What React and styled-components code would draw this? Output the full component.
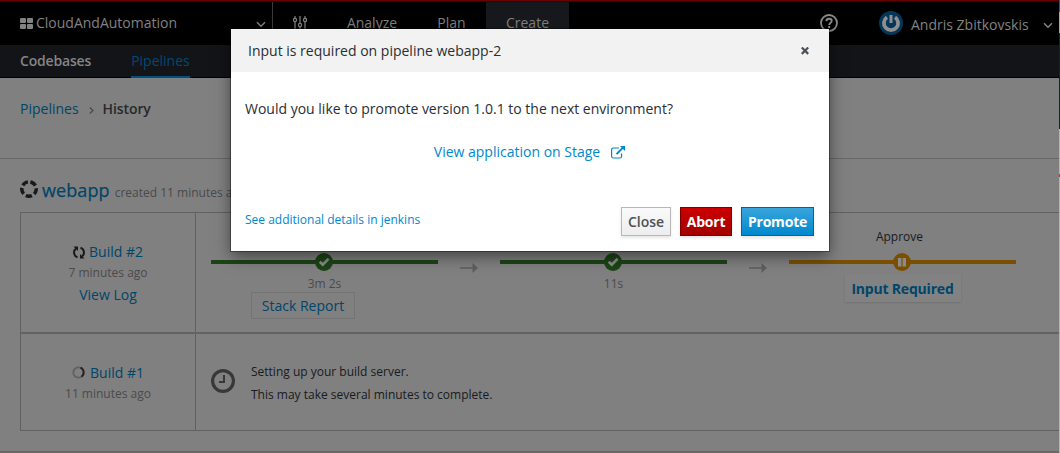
import React from "react";
import styled, { createGlobalStyle } from "styled-components";

const Global = createGlobalStyle`
  * { box-sizing: border-box; }
  body { margin: 0; background: #808080; font-family: "Open Sans", sans-serif; font-size: 14px; color: #1a1a1c; overflow: hidden; }
`;

const Shell = styled.div`
  position: relative;
  width: 1060px;
  height: 453px;
  overflow: hidden;
  display: flex;
`;
const Page = styled.div`
  width: 1059px;
  background: #808080;
  display: flex;
  flex-direction: column;
`;
const WindowEdge = styled.div`
  width: 1px;
  background: linear-gradient(#2c5488 0 12px, #aaa 12px 33px, #1d1f21 33px 129px, #b4b4b4 129px 174px, #a04040 174px 177px, #b4b4b4 177px);
`;
const TopBar = styled.header`
  height: 45px;
  flex: none;
  background: #000;
  border-top: 1px solid #690000;
  box-shadow: inset 0 1px 0 #290000;
  display: flex;
  color: #828282;
  line-height: 20px;
`;
const Space = styled.div`
  width: 273px;
  margin-top: 1px;
  height: 43px;
  border-right: 1px solid #3b3b3d;
  padding: 0 6px 0 20px;
  display: flex;
  align-items: center;
  gap: 3px;
`;
const SpaceName = styled.span`
  flex: 1;
  margin-top: -1px;
`;
const Tool = styled.div`
  width: 54px;
  padding: 13px 0 0 20px;
`;
const TopTab = styled.div`
  width: ${(p) => p.$w}px;
  margin-top: 1px;
  padding-top: 11px;
  text-align: center;
  background: ${(p) => (p.$active ? "linear-gradient(#16171b, #1b1d22)" : "none")};
`;
const User = styled.div`
  margin-left: auto;
  display: flex;
  padding: 10px 6px 0 0;
`;
const Help = styled.span`
  width: 59px;
  margin-top: 2px;
  line-height: 0;
`;
const Avatar = styled.span`
  width: 32px;
  line-height: 0;
`;
const UserName = styled.span`
  width: 132px;
  padding-top: 4px;
`;
const Caret = styled.span`
  display: flex;
  padding-top: ${(p) => p.$top}px;
`;
const SubBar = styled.nav`
  height: 33px;
  flex: none;
  background: #131418;
  border-bottom: 1px solid #000;
  display: flex;
  padding-left: 20px;
  gap: 40px;
`;
const SubTab = styled.span`
  height: 33px;
  padding-top: 5px;
  line-height: 21px;
  font-weight: ${(p) => (p.$active ? 400 : 600)};
  letter-spacing: ${(p) => (p.$active ? 0 : "-0.18px")};
  color: ${(p) => (p.$active ? "#004a75" : "#858585")};
  border-bottom: ${(p) => (p.$active ? "2px solid #005180" : "none")};
`;
const Crumbs = styled.div`
  height: 81px;
  flex: none;
  border-bottom: 1px solid #676767;
  padding: 21px 20px 0;
  display: flex;
  line-height: 20px;
`;
const Link = styled.a`
  color: #004568;
`;
const Sep = styled.span`
  width: 24px;
  padding: 8px 0 0 10px;
  line-height: 0;
`;
const Current = styled.span`
  font-weight: 600;
  letter-spacing: -0.1px;
  color: #27292c;
`;
const Heading = styled.div`
  display: flex;
  align-items: center;
  height: 53px;
  padding: 10px 20px 0;
  flex: none;
`;
const HeadingIcon = styled.svg`
  margin-top: -4px;
`;
const AppName = styled.a`
  font-size: 18px;
  letter-spacing: 0.1px;
  color: #00456a;
  -webkit-text-stroke: 0.25px #00456a;
  margin: -1px 5px 0 4px;
`;
const Created = styled.span`
  font-size: 12px;
  color: #494a4b;
  padding-top: 3px;
`;
const Table = styled.div`
  margin-left: 20px;
  border: 1px solid #606162;
  border-right: 0;
  height: 219px;
  display: flex;
  flex-direction: column;
`;
const Row = styled.div`
  display: flex;
  height: ${(p) => p.$h}px;
  border-bottom: ${(p) => (p.$last ? "none" : "2px solid #626364")};
`;
const BuildCell = styled.div`
  width: 175px;
  flex: none;
  border-right: 1px solid #606162;
  padding-top: 29px;
  text-align: center;
`;
const BuildName = styled.div`
  display: flex;
  justify-content: center;
  align-items: center;
  gap: 4px;
  line-height: 20px;
  color: #00456a;
`;
const Ago = styled.div`
  font-size: 12px;
  line-height: 21px;
  color: #4a4b4c;
`;
const Log = styled.div`
  line-height: 20px;
  padding-top: 2px;
  color: #00456a;
`;
const Stages = styled.div`
  display: flex;
  padding: 14px 0 0 15px;
`;
const Stage = styled.div`
  width: 227px;
  display: flex;
  flex-direction: column;
  align-items: center;
`;
const StageName = styled.div`
  font-size: 12px;
  line-height: 20px;
  height: 26px;
  padding-right: 6px;
`;
const Track = styled.div`
  width: 227px;
  height: 18px;
  display: flex;
  justify-content: center;
  padding-right: 1px;
  background: linear-gradient(${(p) => p.$color}, ${(p) => p.$color}) 0 7px / 100% 4px no-repeat;
`;
const Duration = styled.div`
  font-size: 12px;
  line-height: 20px;
  color: #4a4b4c;
  margin-top: 3px;
`;
const Arrow = styled.div`
  width: 62px;
  padding: 36px 0 0 22px;
  line-height: 0;
`;
const Report = styled.button`
  align-self: flex-start;
  width: 104px;
  height: 27px;
  margin: -2px 0 0 40px;
  padding: 0;
  border: 1px solid #747474;
  background: none;
  font: 400 14px/24px "Open Sans", sans-serif;
  color: #00456a;
`;
const Required = styled(Report)`
  align-self: center;
  width: 116px;
  height: 28px;
  margin: 3px 0 0;
  border: 0;
  background: #828282;
  box-shadow: 0 1px 2px rgba(0, 0, 0, 0.12);
  font-weight: 700;
  letter-spacing: -0.2px;
  line-height: 27px;
`;
const Message = styled.div`
  display: flex;
  align-items: flex-start;
  padding: 26px 0 0 15px;
  gap: 16px;
`;
const Clock = styled.span`
  margin-top: 9px;
  line-height: 0;
`;
const MessageText = styled.div`
  font-size: 12px;
  line-height: 23px;
`;
const PageEnd = styled.div`
  margin-top: auto;
  height: 2px;
  background: #696668;
`;
const Dialog = styled.section`
  position: absolute;
  left: 231px;
  top: 29px;
  width: 598px;
  height: 222px;
  background: #fff;
  box-shadow: 0 0 0 1px rgba(0, 0, 0, 0.35), 0 5px 15px rgba(0, 0, 0, 0.5);
  color: #292e34;
  display: flex;
  flex-direction: column;
`;
const DialogHead = styled.div`
  height: 43px;
  background: #f2f2f2;
  padding: 0 20px 0 17px;
  display: flex;
  align-items: center;
  justify-content: space-between;
`;
const Question = styled.div`
  padding: 27px 14px 0;
  line-height: 20px;
`;
const ViewLine = styled.div`
  display: flex;
  justify-content: center;
  align-items: center;
  gap: 11px;
  margin-top: 23px;
  padding-right: 1px;
  line-height: 20px;
  color: #0088ce;
`;
const DialogFoot = styled.div`
  margin-top: auto;
  padding: 0 15px 15px 14px;
  display: flex;
  align-items: center;
`;
const Details = styled.a`
  flex: 1;
  font-size: 12px;
  color: #0088ce;
  margin-top: -5px;
`;
const tones = {
  plain: ["linear-gradient(#fafafa, #ededed)", "#b7b7b7", "#4d5258"],
  danger: ["linear-gradient(#c00, #a30000)", "#780000", "#fff"],
  primary: ["linear-gradient(#39a5dc, #0088ce)", "#00659c", "#fff"],
};
const Button = styled.button`
  width: ${(p) => p.$w}px;
  height: 29px;
  margin-left: 9px;
  padding: 0;
  font: ${(p) => (p.$tone === "plain" ? 600 : 700)} 14px/27px "Open Sans", sans-serif;
  letter-spacing: ${(p) => (p.$tone === "plain" ? 0 : "-0.2px")};
  background: ${(p) => tones[p.$tone][0]};
  border: 1px solid ${(p) => tones[p.$tone][1]};
  color: ${(p) => tones[p.$tone][2]};
  box-shadow: 0 2px 3px rgba(3, 3, 3, 0.1);
`;

const Chevron = () => (
  <svg width="10" height="7" viewBox="0 0 10 7" fill="none" stroke="#858585" strokeWidth="1.4">
    <path d="M1 1.2 5 5.2 9 1.2" />
  </svg>
);
const Check = () => (
  <svg width="18" height="18" viewBox="0 0 18 18">
    <circle cx="9" cy="9" r="9" fill="#1c4416" />
    <path d="M4.7 8.7 7.8 11.6 13.6 5.8" fill="none" stroke="#8b8b8b" strokeWidth="2.7" />
  </svg>
);
const Pause = () => (
  <svg width="18" height="18" viewBox="0 0 18 18">
    <circle cx="9" cy="9" r="9" fill="#7a5000" />
    <path d="M5 5h3.4v8.5H5zM9.6 5H13v8.5H9.6z" fill="#8b8b8b" />
  </svg>
);
const LongArrow = () => (
  <svg width="18" height="10" viewBox="0 0 18 10">
    <path d="M0 4.2h12.5V0L18 5l-5.500 5V5.800H0z" fill="#5d5e5f" />
  </svg>
);

export default function App() {
  return (
    <>
      <Global />
      <Shell>
        <Page>
          <TopBar>
            <Space>
              <svg width="13" height="11" viewBox="0 0 13 11" fill="#828282">
                <rect width="6" height="5" rx="1" />
                <rect x="7" width="6" height="5" rx="1" />
                <rect y="6" width="6" height="5" rx="1" />
                <rect x="7" y="6" width="6" height="5" rx="1" />
              </svg>
              <SpaceName>CloudAndAutomation</SpaceName>
              <Caret $top={2}><Chevron /></Caret>
            </Space>
            <Tool>
              <svg width="14" height="17" viewBox="0 0 14 17" fill="none" stroke="#858585" strokeWidth="1.2">
                <path d="M2 2v2M2 8v8M7 2v7M7 13v3M12 2v2M12 8v8" />
                <circle cx="2" cy="6" r="1.6" />
                <circle cx="7" cy="11" r="1.6" />
                <circle cx="12" cy="6" r="1.6" />
              </svg>
            </Tool>
            <TopTab $w={90}>Analyze</TopTab>
            <TopTab $w={69}>Plan</TopTab>
            <TopTab $w={83} $active>Create</TopTab>
            <User>
              <Help>
                <svg width="18" height="20" viewBox="0 0 18 20" fill="none" stroke="#8b8b8b">
                  <circle cx="9" cy="10" r="8" strokeWidth="1.8" />
                  <path d="M6.3 8.2C6.5 6.4 7.6 5.8 9 5.8c1.6 0 2.7.8 2.7 2.2C11.7 9.8 9.2 9.6 9.2 12M9.2 13v1.9" strokeWidth="1.9" />
                </svg>
              </Help>
              <Avatar>
                <svg width="24" height="24" viewBox="0 0 24 24" fill="none">
                  <circle cx="12" cy="12" r="12" fill="#04365a" />
                  <path d="M8 6.2a7.1 7.1 0 1 0 8 0" stroke="#8e8f90" strokeWidth="3.8" />
                  <path d="M12 4v8" stroke="#8e8f90" strokeWidth="3" />
                </svg>
              </Avatar>
              <UserName>Andris Zbitkovskis</UserName>
              <Caret $top={11}><Chevron /></Caret>
            </User>
          </TopBar>
          <SubBar>
            <SubTab>Codebases</SubTab>
            <SubTab $active>Pipelines</SubTab>
          </SubBar>
          <Crumbs>
            <Link>Pipelines</Link>
            <Sep>
              <svg width="5" height="7" viewBox="0 0 5 7" fill="none" stroke="#47494b" strokeWidth="1.2">
                <path d="M.8.5 4 3.5.8 6.5" />
              </svg>
            </Sep>
            <Current>History</Current>
          </Crumbs>
          <Heading>
            <HeadingIcon width="18" height="18" viewBox="0 0 18 18" fill="none">
              <circle cx="9" cy="9" r="7.2" stroke="#19191a" strokeWidth="3.5" strokeDasharray="6.3 2.748" transform="rotate(-79 9 9)" />
            </HeadingIcon>
            <AppName>webapp</AppName>
            <Created>created 11 minutes ago</Created>
          </Heading>
          <Table>
            <Row $h={121}>
              <BuildCell>
                <BuildName>
                  <svg width="12" height="13" viewBox="0 0 12 13" fill="none" stroke="#19191a" strokeWidth="2">
                    <path d="M4.5 11.2A4.9 4.9 0 0 1 3 2.6M7.5 1.8A4.9 4.9 0 0 1 9 10.4" />
                    <path d="M.5.5H5V5zM11.5 12.5H7V8z" fill="#19191a" stroke="none" />
                  </svg>
                  Build #2
                </BuildName>
                <Ago>7 minutes ago</Ago>
                <Log>View Log</Log>
              </BuildCell>
              <Stages>
                <Stage>
                  <StageName />
                  <Track $color="#1c4416"><Check /></Track>
                  <Duration>3m 2s</Duration>
                  <Report>Stack Report</Report>
                </Stage>
                <Arrow><LongArrow /></Arrow>
                <Stage>
                  <StageName />
                  <Track $color="#1c4416"><Check /></Track>
                  <Duration>11s</Duration>
                </Stage>
                <Arrow><LongArrow /></Arrow>
                <Stage>
                  <StageName>Approve</StageName>
                  <Track $color="#7a5000"><Pause /></Track>
                  <Required>Input Required</Required>
                </Stage>
              </Stages>
            </Row>
            <Row $h={96} $last>
              <BuildCell>
                <BuildName>
                  <svg width="14" height="14" viewBox="0 0 14 14" fill="none" strokeWidth="1.8">
                    <circle cx="6.5" cy="6.5" r="5.2" stroke="#606060" />
                    <path d="M8.5 1.7a5.2 5.2 0 0 1 1 9" stroke="#222" />
                  </svg>
                  Build #1
                </BuildName>
                <Ago>11 minutes ago</Ago>
              </BuildCell>
              <Message>
                <Clock>
                  <svg width="24" height="24" viewBox="0 0 24 24" fill="none" stroke="#36383a">
                    <circle cx="12" cy="12" r="10.4" strokeWidth="3.2" />
                    <path d="M13 6v7H8" strokeWidth="2" />
                  </svg>
                </Clock>
                <MessageText>
                  Setting up your build server.
                  <br />
                  This may take several minutes to complete.
                </MessageText>
              </Message>
            </Row>
          </Table>
          <PageEnd />
        </Page>
        <WindowEdge />
        <Dialog>
          <DialogHead>
            <span>Input is required on pipeline webapp-2</span>
            <svg width="8" height="8" viewBox="0 0 8 8" stroke="#4d5258" strokeWidth="2.2">
              <path d="M.8.5l6.400 6.400M7.200.5.8 6.900" />
            </svg>
          </DialogHead>
          <Question>Would you like to promote version 1.0.1 to the next environment?</Question>
          <ViewLine>
            View application on Stage
            <svg width="14" height="13" viewBox="0 0 14 13" fill="none" stroke="#0088ce">
              <path d="M8 2H2.5C1.3 2 .6 2.7.6 3.8v6.4c0 1.2.7 1.8 1.9 1.8h6.200c1.200 0 1.900-.6 1.900-1.800V7.500" strokeWidth="1.2" />
              <path d="M5.5 8.2 12 1.7" strokeWidth="1.9" />
              <path d="M9 0h5v5z" fill="#0088ce" stroke="none" />
            </svg>
          </ViewLine>
          <DialogFoot>
            <Details>See additional details in jenkins</Details>
            <Button $tone="plain" $w={50}>Close</Button>
            <Button $tone="danger" $w={52}>Abort</Button>
            <Button $tone="primary" $w={73}>Promote</Button>
          </DialogFoot>
        </Dialog>
      </Shell>
    </>
  );
}
